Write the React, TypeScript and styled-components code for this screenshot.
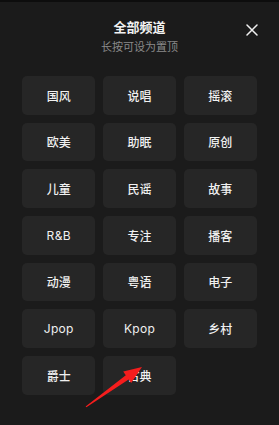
import React from "react";
import styled, { createGlobalStyle } from "styled-components";

const Global = createGlobalStyle`
  html, body { margin: 0; padding: 0; background: #1b1b1b; }
  body { font-family: "Noto Sans CJK SC", "Noto Sans", sans-serif; }
`;

const Page = styled.div`
  width: 279px;
  height: 425px;
  background: #1b1b1b;
  position: relative;
  overflow: hidden;
`;

const TopStrip = styled.div`
  height: 2px;
  background: #0d0d0d;
`;

const Header = styled.div`
  position: relative;
  padding-top: 15.5px;
  text-align: center;
`;

const Title = styled.div`
  font-size: 13px;
  line-height: 18px;
  font-weight: 700;
  color: #f2f2f2;
`;

const Subtitle = styled.div`
  margin-top: 2.3px;
  font-size: 11px;
  line-height: 16px;
  color: #8a8a8a;
`;

const CloseButton = styled.div`
  position: absolute;
  right: 21px;
  top: 21.5px;
  width: 12px;
  height: 12px;
  display: flex;
  align-items: center;
  justify-content: center;
`;

const Grid = styled.div`
  margin-top: 22.2px;
  padding: 0 22.33px;
  display: grid;
  grid-template-columns: repeat(3, 1fr);
  grid-auto-rows: 38.67px;
  column-gap: 8px;
  row-gap: 8px;
`;

const Cell = styled.div<{ $latin?: boolean }>`
  background: #262626;
  border-radius: 5px;
  display: flex;
  align-items: center;
  justify-content: center;
  font-size: 12px;
  font-weight: ${(p) => (p.$latin ? 400 : 500)};
  letter-spacing: ${(p) => (p.$latin ? "0.3px" : "0")};
  color: #f0f0f0;
  font-family: ${(p) =>
    p.$latin
      ? `"Inter", "Noto Sans", sans-serif`
      : `"Noto Sans CJK SC", "Noto Sans", sans-serif`};
`;

const ArrowOverlay = styled.svg`
  position: absolute;
  left: 0;
  top: 0;
  pointer-events: none;
`;

const channels = [
  "国风", "说唱", "摇滚",
  "欧美", "助眠", "原创",
  "儿童", "民谣", "故事",
  "R&B", "专注", "播客",
  "动漫", "粤语", "电子",
  "Jpop", "Kpop", "乡村",
  "爵士", "古典",
];

export default function App() {
  return (
    <Page>
      <Global />
      <TopStrip />
      <Header>
        <Title>全部频道</Title>
        <Subtitle>长按可设为置顶</Subtitle>
        <CloseButton>
          <svg width="12" height="12" viewBox="0 0 12 12">
            <path d="M1 1L11 11M11 1L1 11" stroke="#f0f0f0" strokeWidth="1.5" strokeLinecap="round" />
          </svg>
        </CloseButton>
      </Header>
      <Grid>
        {channels.map((c) => (
          <Cell key={c} $latin={/^[A-Za-z&]+$/.test(c)}>
            {c}
          </Cell>
        ))}
      </Grid>
      <ArrowOverlay width="279" height="425" viewBox="0 0 279 425">
        <polygon
          points="85.6,406.6 125.8,375.2 123.2,371.6 142,367 131.2,383 128.6,379.4 86.4,407.2"
          fill="#f51d1d"
        />
      </ArrowOverlay>
    </Page>
  );
}
